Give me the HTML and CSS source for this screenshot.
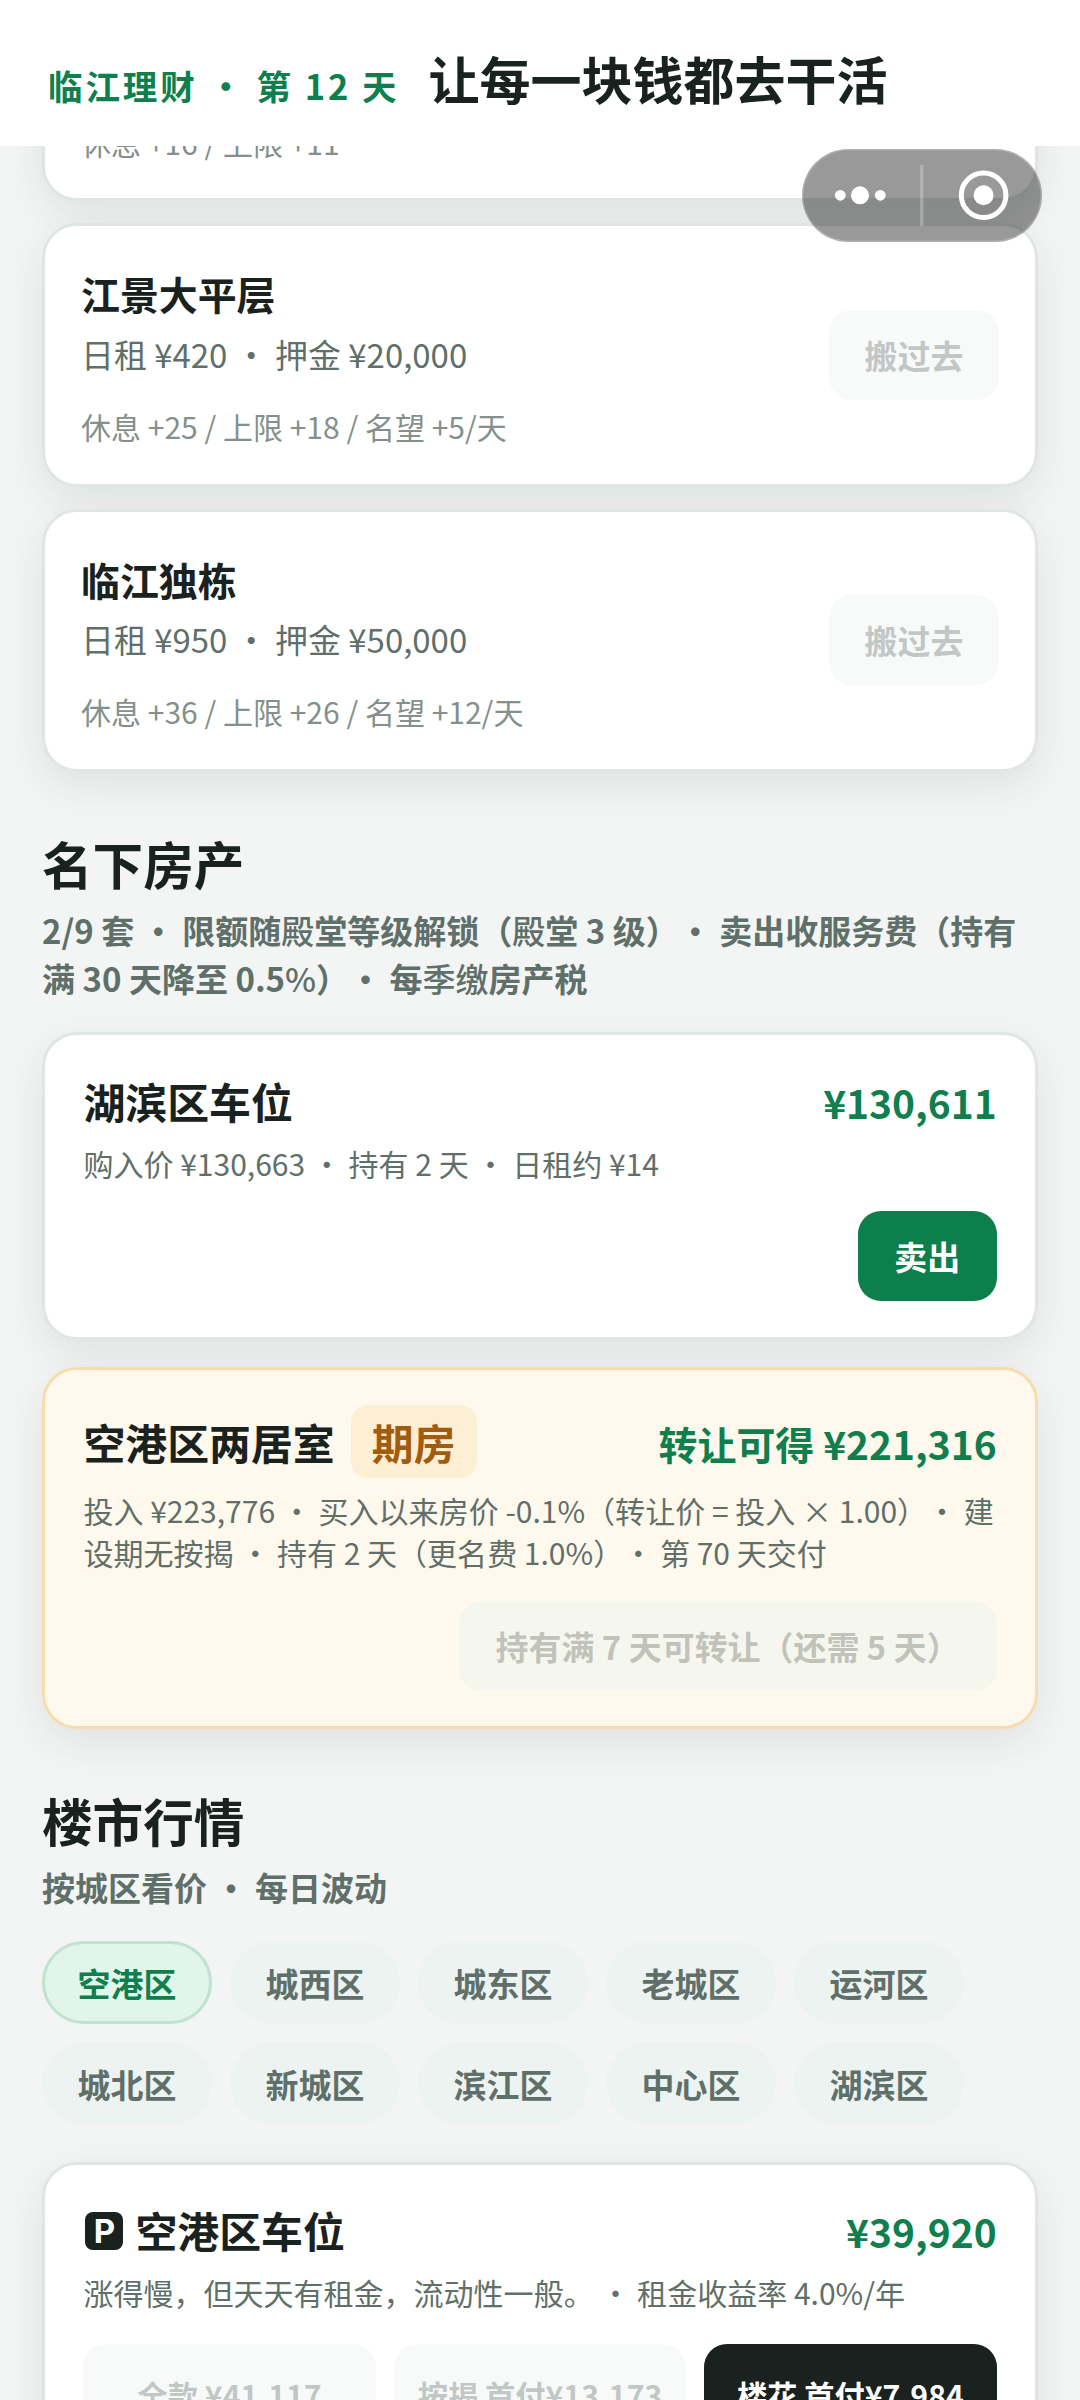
FILE: index.html
```html
<!DOCTYPE html>
<html lang="zh-CN">
<head>
<meta charset="utf-8">
<title>临江理财</title>
<link rel="stylesheet" href="styles.css">
</head>
<body>
<header class="topbar">
  <span class="brand">临江理财 · 第 12 天</span>
  <h1 class="slogan">让每一块钱都去干活</h1>
</header>

<div class="capsule">
  <svg width="240" height="93" viewBox="0 0 240 93" fill="#fff">
    <circle cx="38.3" cy="46.3" r="5.4"/>
    <circle cx="58" cy="46.3" r="9"/>
    <circle cx="78.3" cy="46.3" r="5.4"/>
    <rect x="118" y="16" width="3.4" height="61" fill-opacity=".25"/>
    <circle cx="181.6" cy="46.3" r="22.3" fill="none" stroke="#fff" stroke-width="5"/>
    <circle cx="181.6" cy="46.3" r="10"/>
  </svg>
</div>

<main class="content">
  <section class="homes">
    <article class="card home home-scrolled">
      <div class="home-info"><p class="perk">休息 +16 / 上限 +11</p></div>
    </article>
    <article class="card home">
      <div class="home-info">
        <h3 class="home-name">江景大平层</h3>
        <p class="rent">日租 ¥420 · 押金 ¥20,000</p>
        <p class="perk">休息 +25 / 上限 +18 / 名望 +5/天</p>
      </div>
      <button class="btn btn-off">搬过去</button>
    </article>
    <article class="card home">
      <div class="home-info">
        <h3 class="home-name">临江独栋</h3>
        <p class="rent">日租 ¥950 · 押金 ¥50,000</p>
        <p class="perk">休息 +36 / 上限 +26 / 名望 +12/天</p>
      </div>
      <button class="btn btn-off">搬过去</button>
    </article>
  </section>

  <section class="section">
    <h2 class="heading">名下房产</h2>
    <p class="sub">2/9 套 · 限额随<span class="light">殿</span>堂等级解锁（<span class="light">殿</span>堂 3 级）· 卖出收服务费（持有<br>满 30 天降至 0.5<span class="light">%</span>）· 每<span class="light">季缴</span>房产税</p>
    <article class="card asset">
      <div class="asset-head">
        <h3 class="asset-name">湖滨区车位</h3>
        <span class="price">¥130,611</span>
      </div>
      <p class="note">购入价 ¥130,663 · 持有 2 天 · 日租约 ¥14</p>
      <div class="actions"><button class="btn btn-sell">卖出</button></div>
    </article>
    <article class="card asset asset-presale">
      <div class="asset-head">
        <h3 class="asset-name">空港区两居室<span class="tag">期房</span></h3>
        <span class="price">转让可得 ¥221,316</span>
      </div>
      <p class="note">投入 ¥223,776 · 买入以来房价 -0.1%（转让价 = 投入 × 1.00）· 建<br>设期无按揭 · 持有 2 天（更名费 1.0%）· 第 70 天交付</p>
      <div class="actions"><button class="btn btn-off">持有满 7 天可转让（还需 5 天）</button></div>
    </article>
  </section>

  <section class="section">
    <h2 class="heading">楼市行情</h2>
    <p class="sub">按城区看价 · 每日波动</p>
    <nav class="districts">
      <button class="chip chip-on">空港区</button>
      <button class="chip">城西区</button>
      <button class="chip">城东区</button>
      <button class="chip">老城区</button>
      <button class="chip">运河区</button>
      <button class="chip">城北区</button>
      <button class="chip">新城区</button>
      <button class="chip">滨江区</button>
      <button class="chip">中心区</button>
      <button class="chip">湖滨区</button>
    </nav>
    <article class="card asset">
      <div class="asset-head">
        <h3 class="asset-name"><span class="parking">P</span>空港区车位</h3>
        <span class="price">¥39,920</span>
      </div>
      <p class="note">涨得慢，但天天有租金，流动性一般。 · 租金收益率 4.0%/年</p>
      <div class="offers">
        <button class="offer offer-off">全款 ¥41,117</button>
        <button class="offer offer-off">按揭 首付¥13,173</button>
        <button class="offer">楼花 首付¥7,984</button>
      </div>
    </article>
  </section>
</main>
</body>
</html>
```

FILE: styles.css
```css
* { box-sizing: border-box; margin: 0; padding: 0; }

body {
  height: 2400px;
  overflow: hidden;
  background: #f3f5f4;
  color: #1a2220;
  font-family: "Noto Sans CJK SC", sans-serif;
  text-spacing-trim: space-all;
}

button { border: 0; font-family: inherit; white-space: nowrap; }

.topbar {
  position: relative;
  z-index: 2;
  display: flex;
  align-items: baseline;
  gap: 29px;
  height: 146px;
  padding: 48px 48px 0;
  background: #fff;
}
.brand {
  font-size: 34.56px;
  font-weight: 700;
  letter-spacing: 2.88px;
  color: #0f7f4e;
  white-space: nowrap;
}
.slogan { font-size: 51px; line-height: 60px; font-weight: 700; white-space: nowrap; }

.capsule {
  position: absolute;
  z-index: 3;
  left: 802px;
  top: 149px;
  width: 240px;
  height: 93px;
  border-radius: 47px;
  background: rgba(0, 0, 0, .4);
  box-shadow: inset 0 0 0 1.5px rgba(255, 255, 255, .22);
}
.capsule svg { display: block; }

.content { padding: 0 42px; }

.card {
  background: #fff;
  border: 3px solid #e0e6e4;
  border-radius: 35px;
  box-shadow: 0 14px 40px rgba(26, 40, 34, .09);
}

.homes {
  display: flex;
  flex-direction: column;
  gap: 22px;
  margin-top: -208px;
}
.home {
  display: flex;
  justify-content: space-between;
  align-items: center;
  height: 263.4px;
  padding: 6px 36px 0 36px;
}
.home .btn { padding: 0 35.6px; margin-top: -6px; }
.home-scrolled { align-items: flex-end; padding-bottom: 35px; }
.home-name { font-size: 38.88px; line-height: 48px; font-weight: 700; }
.rent { margin-top: 14.6px; font-size: 32.95px; line-height: 44px; color: #5f6f69; }
.perk { margin-top: 29px; font-size: 30.02px; line-height: 42px; color: #83908b; }

.btn {
  height: 90px;
  padding: 0 36.4px;
  border-radius: 23px;
  font-size: 32.95px;
  font-weight: 700;
  line-height: 90px;
}
.btn-off { background: #edf3f1; color: #5f6f69; opacity: .38; }
.asset-presale .btn-off { padding: 0 37px; background: #e7f4f2; }
.btn-sell { background: #0d7f4d; color: #fff; }

.section { padding-top: 61px; }
.section + .section { padding-top: 61px; }
.heading { font-size: 50.6px; line-height: 60px; font-weight: 700; }
.sub {
  margin-top: 12.5px;
  font-size: 33px;
  line-height: 48.1px;
  font-weight: 700;
  color: #5f6f69;
  white-space: nowrap;
}
.light { font-weight: 500; }
.sub + .asset { margin-top: 30.5px; }

.asset { padding: 35.6px 38.4px; }
.asset + .asset { margin-top: 27px; }
.asset-head { display: flex; justify-content: space-between; align-items: center; }
.asset-name { display: flex; align-items: center; font-size: 41.9px; line-height: 60px; font-weight: 700; }
.price { margin-top: 2px; font-size: 38.95px; line-height: 50px; font-weight: 700; color: #0f7f4e; }
.note {
  margin-top: 10.8px;
  font-size: 30.02px;
  line-height: 42.3px;
  color: #5f6f69;
  white-space: nowrap;
}
.actions { display: flex; justify-content: flex-end; margin-top: 27px; }

.asset-presale { background: #fff8ed; border-color: #f9dcae; }
.tag {
  margin-left: 16px;
  padding: 0 21px;
  border-radius: 17px;
  line-height: 73px;
  background: #fcefd3;
  color: #a15c10;
}

.districts { display: flex; flex-wrap: wrap; gap: 18px; margin: 30.5px 0 36.4px; }
.chip {
  width: 170px;
  height: 83px;
  border: 3px solid transparent;
  border-radius: 42px;
  background: #ecf3f1;
  font-size: 32.95px;
  font-weight: 700;
  color: #5f6f69;
}
.chip-on { background: #e1f5ea; border-color: #bfe2d1; color: #0f7f4e; }

.parking {
  width: 38px;
  height: 38px;
  margin: 2px 12px 0 2px;
  border-radius: 8px;
  background: #1a2220;
  color: #fff;
  font: 700 33px/38px Inter, sans-serif;
  text-align: center;
}
.offers { display: grid; grid-template-columns: repeat(3, 1fr); gap: 18px; margin-top: 30.4px; }
.offer {
  height: 103px;
  border-radius: 23px;
  background: #1a2220;
  color: #fff;
  font-size: 30.24px;
  font-weight: 700;
}
.offer-off { background: #edf3f1; color: #5f6f69; opacity: .38; }
```
